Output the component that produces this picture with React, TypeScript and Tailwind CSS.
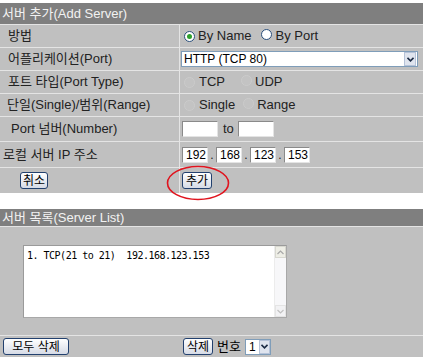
import React from 'react';

const kr = { fontFamily: '"Liberation Sans", "Noto Sans CJK KR", sans-serif' };

const Radio = ({ checked = false, disabled = false }: { checked?: boolean; disabled?: boolean }) => (
  <span
    className={`inline-flex w-[11px] h-[11px] rounded-full border items-center justify-center ${
      disabled ? 'border-[#cbcbcb] bg-[#c3c3c3]' : 'border-[#2a4f7c] bg-white'
    }`}
  >
    {checked && <span className="w-[5px] h-[5px] rounded-full bg-[#2ea02e]" />}
  </span>
);

const XpButton = ({ children, className = '' }: { children: React.ReactNode; className?: string }) => (
  <button
    className={`h-[17px] flex items-center justify-center rounded-[3px] border border-[#22406e] bg-linear-to-b from-white to-[#d6dbe6] text-[12px] leading-none text-black ${className}`}
  >
    {children}
  </button>
);

const Field = ({ value = '', className = '' }: { value?: string; className?: string }) => (
  <div
    className={`h-[16px] bg-white border border-t-[#8a8a8a] border-l-[#8a8a8a] border-r-[#e4e4e4] border-b-[#e4e4e4] flex items-center pl-[3px] text-[12px] text-black ${className}`}
  >
    {value}
  </div>
);

const Chevron = () => (
  <svg width="7" height="5" viewBox="0 0 7 5">
    <path d="M0.5 0.8 L3.5 3.8 L6.5 0.8" fill="none" stroke="#1c2b44" strokeWidth="1.6" />
  </svg>
);

const Row = ({ label, children, h, labelClass = 'pl-[8px]' }: { label?: React.ReactNode; children?: React.ReactNode; h: string; labelClass?: string }) => (
  <div className={`grid grid-cols-[179px_1fr] gap-px ${h}`}>
    <div className={`bg-[#c0c0c0] flex items-center text-[13px] text-[#222] ${labelClass}`}>{label}</div>
    <div className="bg-[#c0c0c0] flex items-center pl-[2px] text-[13px] text-[#222]">{children}</div>
  </div>
);

export default function App() {
  return (
    <div className="relative w-[425px] h-[358px] bg-white overflow-hidden" style={kr}>
      {/* Add Server */}
      <div className="pt-[3px] w-[423px]">
        <div className="h-[21px] bg-[#7f7f7f] flex items-center pl-[2px] text-[13px] text-[#f2f2f2]">서버 추가(Add Server)</div>
        <div className="flex flex-col gap-px bg-[#e4e4e4] pt-px">
          <Row label="방법" h="h-[22px]">
            <div className="flex items-center gap-[3px] pl-[2px]">
              <Radio checked />
              <span>By Name</span>
              <span className="ml-[7px]"><Radio /></span>
              <span>By Port</span>
            </div>
          </Row>
          <Row label="어플리케이션(Port)" h="h-[22px]">
            <div className="ml-[-1px] w-[237px] h-[16px] bg-white border border-[#7f9db9] flex items-center justify-between">
              <span className="pl-[2px] text-[12px] text-black">HTTP (TCP 80)</span>
              <span className="w-[12px] h-[14px] mr-px bg-[#dfe4ee] border border-[#b5c2d8] flex items-center justify-center">
                <Chevron />
              </span>
            </div>
          </Row>
          <Row label="포트 타입(Port Type)" h="h-[22px]">
            <div className="flex items-center pl-[2px]">
              <Radio disabled />
              <span className="ml-[4px]">TCP</span>
              <span className="ml-[16px]"><Radio disabled /></span>
              <span className="ml-[3px]">UDP</span>
            </div>
          </Row>
          <Row label="단일(Single)/범위(Range)" h="h-[22px]" labelClass="pl-[7px]">
            <div className="flex items-center pl-[2px]">
              <Radio disabled />
              <span className="ml-[4px]">Single</span>
              <span className="ml-[8px]"><Radio disabled /></span>
              <span className="ml-[3px]">Range</span>
            </div>
          </Row>
          <Row label="Port 넘버(Number)" h="h-[24px]" labelClass="pl-[11px]">
            <div className="flex items-center">
              <Field className="w-[36px]" />
              <span className="ml-[5px] mr-[4px]">to</span>
              <Field className="w-[36px]" />
            </div>
          </Row>
          <Row label="로컬 서버 IP 주소" h="h-[25px]" labelClass="pl-[3px]">
            <div className="flex items-center text-[12px]">
              <Field value="192" className="w-[26px]" />
              <span className="w-[8px] text-center">.</span>
              <Field value="168" className="w-[26px]" />
              <span className="w-[8px] text-center">.</span>
              <Field value="123" className="w-[26px]" />
              <span className="w-[8px] text-center">.</span>
              <Field value="153" className="w-[26px]" />
            </div>
          </Row>
          <Row
            h="h-[25px]"
            labelClass="pl-[20px]"
            label={<XpButton className="w-[28px]">취소</XpButton>}
          >
            <XpButton className="w-[30px]">추가</XpButton>
          </Row>
        </div>
      </div>

      {/* Server List */}
      <div className="mt-[16px] w-[423px]">
        <div className="h-[17px] bg-[#7f7f7f] flex items-center pl-[2px] text-[13px] text-[#f2f2f2]">서버 목록(Server List)</div>
        <div className="h-px bg-[#e4e4e4]" />
        <div className="h-[108px] bg-[#c0c0c0] pt-[18px] pl-[23px]">
          <div className="w-[264px] h-[73px] bg-white border border-t-[#9a9a9a] border-l-[#9a9a9a] border-r-[#a8a8a8] border-b-[#a8a8a8] flex">
            <div
              className="flex-1 pl-[3px] pt-[2px] text-[10px] tracking-[-0.5px] text-black whitespace-pre"
              style={{ fontFamily: '"DejaVu Sans Mono", "Noto Sans CJK KR", monospace' }}
            >
              1. TCP(21 to 21)  192.168.123.153
            </div>
            <div className="w-[12px] flex flex-col justify-between bg-[#f7f7f9] border-l border-[#ececec]">
              <div className="h-[12px] bg-[#eeeee6] border border-[#d8d8d0] flex items-center justify-center">
                <svg width="7" height="5" viewBox="0 0 7 5"><path d="M0.5 4 L3.5 1 L6.5 4" fill="none" stroke="#a8a8a8" strokeWidth="1.2" /></svg>
              </div>
              <div className="h-[12px] bg-[#f2f2f4] border border-[#e4e4e4] flex items-center justify-center">
                <svg width="7" height="5" viewBox="0 0 7 5"><path d="M0.5 1 L3.5 4 L6.5 1" fill="none" stroke="#c0c0c0" strokeWidth="1.2" /></svg>
              </div>
            </div>
          </div>
        </div>
        <div className="h-px bg-[#e4e4e4]" />
        <div className="h-[21px] bg-[#c0c0c0] flex items-center pl-[3px]">
          <XpButton className="w-[66px]">모두 삭제</XpButton>
          <XpButton className="w-[30px] ml-[114px]">삭제</XpButton>
          <span className="ml-[4px] text-[13px] text-black">번호</span>
          <div className="ml-[4px] h-[16px] w-[26px] bg-white border border-[#7f9db9] flex items-center justify-between">
            <span className="pl-[3px] text-[12px] text-black leading-none">1</span>
            <span className="w-[11px] h-[14px] bg-[#dfe4ee] border border-[#b5c2d8] flex items-center justify-center">
              <Chevron />
            </span>
          </div>
        </div>
      </div>

      {/* highlight ring around 추가 */}
      <svg className="absolute left-[166px] top-[165px]" width="64" height="36" viewBox="0 0 64 36">
        <ellipse cx="32" cy="18" rx="30.5" ry="16.5" fill="none" stroke="#e0141e" strokeWidth="1.6" />
      </svg>
    </div>
  );
}
